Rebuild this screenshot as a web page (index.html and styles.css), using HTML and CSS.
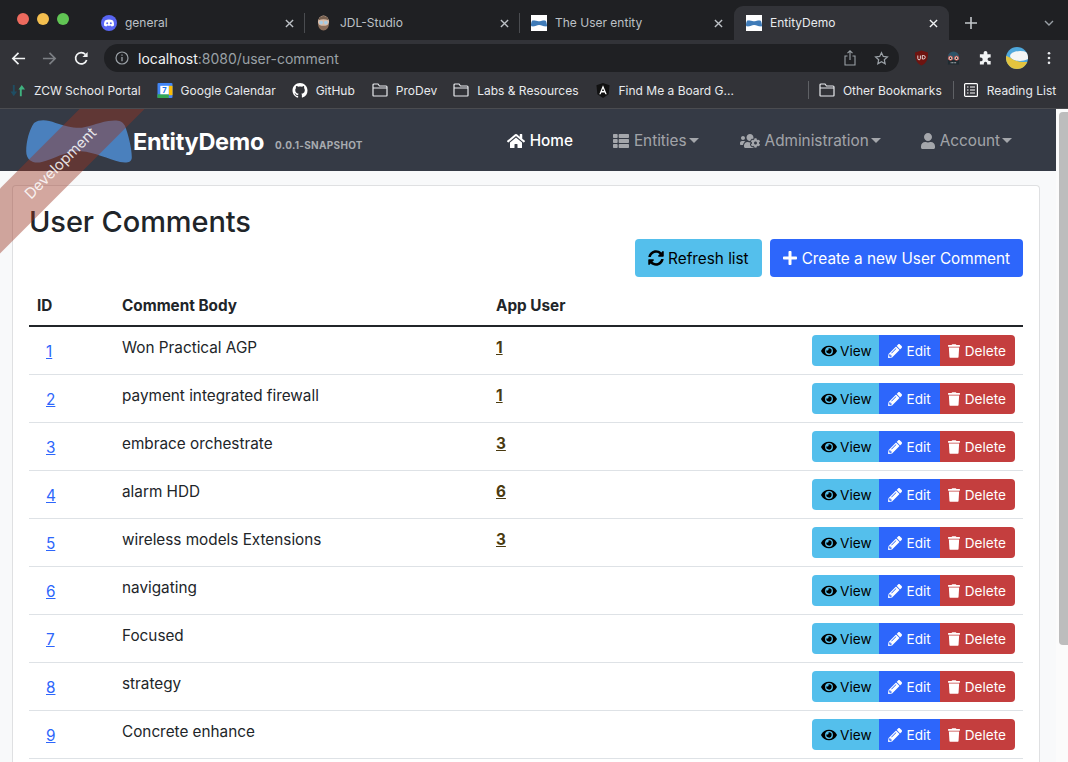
FILE: index.html
```html
<!DOCTYPE html>
<html lang="en">
<head>
    <meta charset="UTF-8">
    <meta name="viewport" content="width=device-width, initial-scale=1.0">
    <title>EntityDemo</title>
    <link rel="stylesheet" href="styles.css">
</head>
<body>
    <svg class="sprites" aria-hidden="true">
        <symbol id="i-home" viewBox="0 0 576 512"><path d="M280.37 148.26L96 300.11V464a16 16 0 0 0 16 16l112.06-.29a16 16 0 0 0 15.92-16V368a16 16 0 0 1 16-16h64a16 16 0 0 1 16 16v95.64a16 16 0 0 0 16 16.05L464 480a16 16 0 0 0 16-16V300L295.67 148.26a12.19 12.19 0 0 0-15.3 0zM571.6 251.47L488 182.56V44.05a12 12 0 0 0-12-12h-56a12 12 0 0 0-12 12v72.61L318.47 43a48 48 0 0 0-61 0L4.34 251.47a12 12 0 0 0-1.6 16.9l25.5 31A12 12 0 0 0 45.15 301l235.22-193.74a12.19 12.19 0 0 1 15.3 0L530.9 301a12 12 0 0 0 16.9-1.6l25.5-31a12 12 0 0 0-1.7-16.93z"/></symbol>
        <symbol id="i-list" viewBox="0 0 512 512"><path d="M149.333 216v80c0 13.255-10.745 24-24 24H24c-13.255 0-24-10.745-24-24v-80c0-13.255 10.745-24 24-24h101.333c13.255 0 24 10.745 24 24zM0 376v80c0 13.255 10.745 24 24 24h101.333c13.255 0 24-10.745 24-24v-80c0-13.255-10.745-24-24-24H24c-13.255 0-24 10.745-24 24zM125.333 32H24C10.745 32 0 42.745 0 56v80c0 13.255 10.745 24 24 24h101.333c13.255 0 24-10.745 24-24V56c0-13.255-10.745-24-24-24zm80 448H488c13.255 0 24-10.745 24-24v-80c0-13.255-10.745-24-24-24H205.333c-13.255 0-24 10.745-24 24v80c0 13.255 10.745 24 24 24zm-24-424v80c0 13.255 10.745 24 24 24H488c13.255 0 24-10.745 24-24V56c0-13.255-10.745-24-24-24H205.333c-13.255 0-24 10.745-24 24zm24 264H488c13.255 0 24-10.745 24-24v-80c0-13.255-10.745-24-24-24H205.333c-13.255 0-24 10.745-24 24v80c0 13.255 10.745 24 24 24z"/></symbol>
        <symbol id="i-users-cog" viewBox="0 0 640 512"><path d="M610.5 341.3c2.6-14.1 2.6-28.5 0-42.6l25.8-14.9c3-1.7 4.3-5.2 3.3-8.5-6.7-21.6-18.2-41.2-33.2-57.4-2.3-2.5-6-3.1-9-1.4l-25.8 14.9c-10.9-9.3-23.4-16.5-36.9-21.3v-29.8c0-3.4-2.4-6.4-5.7-7.1-22.3-5-45-4.8-66.2 0-3.3.7-5.7 3.7-5.7 7.1v29.8c-13.5 4.8-26 12-36.9 21.3l-25.8-14.9c-2.9-1.7-6.7-1.1-9 1.4-15 16.2-26.5 35.8-33.2 57.4-1 3.3.4 6.8 3.3 8.5l25.8 14.9c-2.6 14.1-2.6 28.5 0 42.6l-25.8 14.9c-3 1.7-4.3 5.2-3.3 8.5 6.7 21.6 18.2 41.1 33.2 57.4 2.3 2.5 6 3.1 9 1.4l25.8-14.9c10.9 9.3 23.4 16.5 36.9 21.3v29.8c0 3.4 2.4 6.4 5.7 7.1 22.3 5 45 4.8 66.2 0 3.3-.7 5.7-3.7 5.7-7.1v-29.8c13.5-4.8 26-12 36.9-21.3l25.8 14.9c2.9 1.7 6.7 1.1 9-1.4 15-16.2 26.5-35.8 33.2-57.4 1-3.3-.4-6.8-3.3-8.5l-25.8-14.9zM496 368.5c-26.8 0-48.5-21.8-48.5-48.5s21.8-48.5 48.5-48.5 48.5 21.8 48.5 48.5-21.7 48.5-48.5 48.5zM96 224c35.3 0 64-28.7 64-64s-28.7-64-64-64-64 28.7-64 64 28.7 64 64 64zm224 32c1.9 0 3.7-.5 5.6-.6 8.3-21.7 20.5-42.1 36.3-59.2 7.4-8 17.9-12.6 28.9-12.6 6.9 0 13.7 1.8 19.6 5.3l7.9 4.6c.8-.5 1.6-.9 2.4-1.4 7-14.6 11.2-30.8 11.2-48 0-61.9-50.1-112-112-112S208 82.1 208 144c0 61.9 50.1 112 112 112zm105.2 194.5c-2.3-1.2-4.6-2.6-6.8-3.9-8.2 4.8-15.3 9.8-27.5 9.8-10.9 0-21.4-4.6-28.9-12.6-18.3-19.8-32.3-43.9-40.2-69.6-10.7-34.5 24.9-49.7 25.8-50.3-.1-2.6-.1-5.2 0-7.8l-7.9-4.6c-3.8-2.2-7-5-9.8-8.1-3.3.2-6.5.6-9.8.6-24.6 0-47.6-6-68.5-16h-8.3C179.6 288 128 339.6 128 403.2V432c0 26.5 21.5 48 48 48h255.4c-3.7-6-6.2-12.8-6.2-20.3v-9.2zM173.1 274.6C161.5 263.1 145.6 256 128 256H64c-35.3 0-64 28.7-64 64v32c0 17.7 14.3 32 32 32h65.9c6.3-47.4 34.9-87.3 75.2-109.4z"/></symbol>
        <symbol id="i-user" viewBox="0 0 448 512"><path d="M224 256c70.7 0 128-57.3 128-128S294.7 0 224 0 96 57.3 96 128s57.3 128 128 128zm89.6 32h-16.7c-22.2 10.2-46.9 16-72.9 16s-50.6-5.8-72.9-16h-16.7C60.2 288 0 348.2 0 422.4V464c0 26.5 21.5 48 48 48h352c26.5 0 48-21.5 48-48v-41.6c0-74.2-60.2-134.4-134.4-134.4z"/></symbol>
        <symbol id="i-eye" viewBox="0 0 576 512"><path d="M572.52 241.4C518.29 135.59 410.93 64 288 64S57.68 135.64 3.48 241.41a32.35 32.35 0 0 0 0 29.19C57.71 376.41 165.07 448 288 448s230.32-71.64 284.52-177.41a32.35 32.35 0 0 0 0-29.19zM288 400a144 144 0 1 1 144-144 143.93 143.93 0 0 1-144 144zm0-240a95.31 95.31 0 0 0-25.31 3.79 47.85 47.85 0 0 1-66.9 66.9A95.78 95.78 0 1 0 288 160z"/></symbol>
        <symbol id="i-pencil" viewBox="0 0 512 512"><path d="M497.9 142.1l-46.1 46.1c-4.7 4.7-12.3 4.7-17 0l-111-111c-4.7-4.7-4.7-12.3 0-17l46.1-46.1c18.7-18.7 49.1-18.7 67.9 0l60.1 60.1c18.8 18.7 18.8 49.1 0 67.9zM284.2 99.8L21.6 362.4.4 483.9c-2.9 16.4 11.4 30.6 27.8 27.8l121.5-21.3 262.6-262.6c4.7-4.7 4.7-12.3 0-17l-111-111c-4.8-4.7-12.4-4.7-17.1 0zM124.1 339.9c-5.5-5.5-5.5-14.3 0-19.8l154-154c5.5-5.5 14.3-5.5 19.8 0s5.5 14.3 0 19.8l-154 154c-5.5 5.5-14.3 5.5-19.8 0zM88 424h48v36.3l-64.5 11.3-31.1-31.1L51.7 376H88v48z"/></symbol>
        <symbol id="i-trash" viewBox="0 0 448 512"><path d="M432 32H312l-9.4-18.7A24 24 0 0 0 281.1 0H166.8a23.72 23.72 0 0 0-21.4 13.3L136 32H16A16 16 0 0 0 0 48v32a16 16 0 0 0 16 16h416a16 16 0 0 0 16-16V48a16 16 0 0 0-16-16zM53.2 467a48 48 0 0 0 47.9 45h245.8a48 48 0 0 0 47.9-45L416 128H32z"/></symbol>
        <symbol id="i-sync" viewBox="0 0 512 512"><path d="M370.72 133.28C339.458 104.008 298.888 87.962 255.848 88c-77.458.068-144.328 53.178-162.791 126.85-1.344 5.363-6.122 9.15-11.651 9.15H24.103c-7.498 0-13.194-6.807-11.807-14.176C33.933 94.924 134.813 8 256 8c66.448 0 126.791 26.136 171.315 68.685L463.03 40.97C478.149 25.851 504 36.559 504 57.941V192c0 13.255-10.745 24-24 24H345.941c-21.382 0-32.09-25.851-16.971-40.971l41.75-41.749zM32 296h134.059c21.382 0 32.09 25.851 16.971 40.971l-41.75 41.75c31.262 29.273 71.835 45.319 114.876 45.28 77.418-.07 144.315-53.144 162.787-126.849 1.344-5.363 6.122-9.15 11.651-9.15h57.304c7.498 0 13.194 6.807 11.807 14.176C478.067 417.076 377.187 504 256 504c-66.448 0-126.791-26.136-171.315-68.685L48.97 471.03C33.851 486.149 8 475.441 8 454.059V320c0-13.255 10.745-24 24-24z"/></symbol>
        <symbol id="i-plus" viewBox="0 0 448 512"><path d="M416 208H272V64c0-17.67-14.33-32-32-32h-32c-17.67 0-32 14.33-32 32v144H32c-17.67 0-32 14.33-32 32v32c0 17.67 14.33 32 32 32h144v144c0 17.67 14.33 32 32 32h32c17.67 0 32-14.33 32-32V304h144c17.67 0 32-14.33 32-32v-32c0-17.67-14.33-32-32-32z"/></symbol>
        <symbol id="i-bowtie" viewBox="0 0 108 45"><path d="M8 3C14-1 22 0 30 3C40 6 46 8 54 8C62 8 72 3 84 1C92 0 98 0 101 6C104 14 108 28 108 38C108 44 102 44 96 43C84 40 70 33 56 32C42 31 28 40 16 43C8 45 0 42 0 32C0 22 3 10 8 3Z"/></symbol>
        <symbol id="i-folder" viewBox="0 0 16 14"><path d="M1 12.5V2a1 1 0 0 1 1-1h4l1.5 2H14a1 1 0 0 1 1 1v8.500a.5.5 0 0 1-.5.5h-13a.5.5 0 0 1-.5-.5zM1 5h14" fill="none" stroke="currentColor" stroke-width="1.2"/></symbol>
        <symbol id="i-close" viewBox="0 0 10 10"><path d="M1 1l8 8M9 1l-8 8" fill="none" stroke="currentColor" stroke-width="1.5"/></symbol>
    </svg>

    <div class="tabstrip">
        <div class="traffic">
            <span class="light light-red"></span>
            <span class="light light-yellow"></span>
            <span class="light light-green"></span>
        </div>
        <div class="tab">
            <svg class="favicon" viewBox="0 0 16 16"><circle cx="8" cy="8" r="8" fill="#5865f2"/><path d="M4 5.500c2.500-1.200 5.500-1.200 8 0 .9 1.800 1.100 3.500 1 5-1 .7-1.800 1-2.500 1.100l-.6-1c-1.200.3-2.600.3-3.800 0l-.6 1c-.7-.1-1.500-.4-2.500-1.100-.1-1.500.1-3.200 1-5z" fill="#fff"/><circle cx="6.200" cy="8.200" r="1" fill="#5865f2"/><circle cx="9.800" cy="8.200" r="1" fill="#5865f2"/></svg>
            <span class="tab-title">general</span>
            <svg class="tab-close"><use href="#i-close"/></svg>
        </div>
        <div class="tab">
            <svg class="favicon favicon-face" viewBox="0 0 14 16"><ellipse cx="7" cy="7" rx="6" ry="7" fill="#d8bca8"/><path d="M1 8c0 5 2.800 8 6 8s6-3 6-8c-1 2.500-3 3-6 3S2 10.500 1 8z" fill="#8a6d5a"/><path d="M1.500 5C2.500-1 11.500-1 12.500 5 9 3.500 5 3.500 1.500 5z" fill="#77604f"/><circle cx="4.500" cy="7.500" r="2" fill="#a9cbe2"/><circle cx="9.500" cy="7.500" r="2" fill="#a9cbe2"/></svg>
            <span class="tab-title">JDL-Studio</span>
            <svg class="tab-close"><use href="#i-close"/></svg>
        </div>
        <div class="tab tab-last">
            <div class="favicon favicon-box"><svg viewBox="0 0 108 45"><use href="#i-bowtie"/></svg></div>
            <span class="tab-title">The User entity</span>
            <svg class="tab-close"><use href="#i-close"/></svg>
        </div>
        <div class="tab tab-active">
            <div class="favicon favicon-box"><svg viewBox="0 0 108 45"><use href="#i-bowtie"/></svg></div>
            <span class="tab-title">EntityDemo</span>
            <svg class="tab-close"><use href="#i-close"/></svg>
        </div>
        <svg class="new-tab" viewBox="0 0 12 12"><path d="M6 0v12M0 6h12" fill="none" stroke="currentColor" stroke-width="1.600"/></svg>
        <svg class="tab-menu" viewBox="0 0 10 6"><path d="M1 1l4 4 4-4" fill="none" stroke="currentColor" stroke-width="1.400"/></svg>
    </div>

    <div class="toolbar">
        <svg class="tool tool-back" viewBox="0 0 16 16"><path d="M15 8H2M8 2L2 8l6 6" fill="none" stroke="currentColor" stroke-width="1.800"/></svg>
        <svg class="tool tool-forward" viewBox="0 0 16 16"><path d="M1 8h13M8 2l6 6-6 6" fill="none" stroke="currentColor" stroke-width="1.800"/></svg>
        <svg class="tool tool-reload" viewBox="0 0 16 16"><path d="M13.500 9.500A6 6 0 1 1 12.200 3.700" fill="none" stroke="currentColor" stroke-width="1.800"/><path d="M14.500 1v5.500H9z" fill="currentColor"/></svg>
        <div class="omnibox">
            <svg class="omni-info" viewBox="0 0 14 14"><circle cx="7" cy="7" r="6" fill="none" stroke="currentColor" stroke-width="1.200"/><path d="M7 6v4.200M7 3.500v1.300" stroke="currentColor" stroke-width="1.300"/></svg>
            <span class="omni-url"><b>localhost</b>:8080/user-comment</span>
            <svg class="omni-share" viewBox="0 0 12 16"><path d="M3.500 6H1v9h10V6H8.500M6 10V1M3.500 3.200L6 .8l2.500 2.400" fill="none" stroke="currentColor" stroke-width="1.100"/></svg>
            <svg class="omni-star" viewBox="0 0 16 16"><path d="M8 1.800l1.900 4 4.400.5-3.300 3 .9 4.400L8 11.500l-3.900 2.200.9-4.400-3.300-3 4.400-.5z" fill="none" stroke="currentColor" stroke-width="1.300"/></svg>
        </div>
        <svg class="ext ext-ublock" viewBox="0 0 14 16"><path d="M7 .5l6.500 2c0 6-.8 10.500-6.500 13C1.300 13 .5 8.500.5 2.500z" fill="#6e1410"/><path d="M3.300 5.500v3a1.300 1.300 0 0 0 2.600 0v-3M7.800 5.500h1.200a1.700 1.700 0 0 1 0 3.500H7.800z" fill="none" stroke="#fff" stroke-width=".8"/></svg>
        <svg class="ext ext-ghost" viewBox="0 0 16 16"><path d="M2 14V7a6 6 0 0 1 12 0v7z" fill="#2c5468"/><path d="M2 10h12v5H2z" fill="#1f2a30"/><path d="M5 13h6" stroke="#c9ced1" stroke-width="1.200" stroke-dasharray="1 .6"/><circle cx="4.800" cy="8.200" r="2.300" fill="#f0d9cf" stroke="#c9473f" stroke-width=".8"/><circle cx="11.200" cy="8.200" r="2.300" fill="#f0d9cf" stroke="#c9473f" stroke-width=".8"/><circle cx="4.800" cy="8.200" r=".9" fill="#222"/><circle cx="11.200" cy="8.200" r=".9" fill="#222"/></svg>
        <svg class="ext ext-puzzle" viewBox="0 0 16 16"><path d="M6 2.500a2 2 0 0 1 4 0V4h3.500v3.500H12a1.800 1.800 0 0 0 0 3.600h1.500V15H9.800v-1.200a1.800 1.800 0 0 0-3.600 0V15H2v-3.500h1a2 2 0 0 0 0-4H2V4h4z" fill="#f1f3f4"/></svg>
        <svg class="avatar" viewBox="0 0 22 22"><defs><clipPath id="avatar-clip"><circle cx="11" cy="11" r="11"/></clipPath></defs><g clip-path="url(#avatar-clip)"><rect width="22" height="22" fill="#4fa8dc"/><ellipse cx="14" cy="9" rx="10" ry="5" fill="#f4f6f6"/><path d="M0 9c5 1 8 7 22 6v7H0z" fill="#e3c43f"/></g></svg>
        <svg class="kebab" viewBox="0 0 4 16"><circle cx="2" cy="2.500" r="1.500"/><circle cx="2" cy="8" r="1.500"/><circle cx="2" cy="13.500" r="1.500"/></svg>
    </div>

    <div class="bookmarks">
        <div class="mark mark-zcw">
            <svg class="mark-icon" viewBox="0 0 16 16"><path d="M2.500 2v7H0l3.500 5L7 9H4.500V2z" fill="#1f4e63"/><path d="M12 14V7h3.500L12 2 8.500 7H10v7z" fill="#3fb27f"/></svg>
            <span>ZCW School Portal</span>
        </div>
        <div class="mark">
            <svg class="mark-icon" viewBox="0 0 16 16"><rect width="16" height="16" rx="1" fill="#4285f4"/><rect x="12" y="3" width="4" height="10" fill="#fbbc04"/><rect y="12" width="12" height="4" fill="#34a853"/><rect x="3" y="3" width="9" height="9" fill="#fff"/><text x="7.500" y="10.500" class="cal-num">7</text></svg>
            <span>Google Calendar</span>
        </div>
        <div class="mark">
            <svg class="mark-icon" viewBox="0 0 16 16"><path fill="#fff" d="M8 0C3.580 0 0 3.580 0 8c0 3.540 2.290 6.530 5.470 7.590.4.070.55-.17.55-.38 0-.19-.01-.82-.01-1.490-2.010.370-2.530-.49-2.690-.94-.09-.23-.48-.94-.82-1.130-.28-.15-.68-.52-.01-.53.63-.01 1.080.58 1.230.82.720 1.210 1.870.87 2.330.66.070-.52.280-.87.510-1.070-1.780-.2-3.640-.89-3.640-3.950 0-.87.310-1.590.82-2.150-.08-.2-.36-1.020.08-2.120 0 0 .67-.21 2.200.82.640-.18 1.320-.27 2-.27s1.360.09 2 .27c1.530-1.040 2.200-.82 2.200-.82.440 1.100.160 1.920.08 2.120.51.560.82 1.270.82 2.150 0 3.070-1.870 3.750-3.650 3.950.29.250.54.730.54 1.480 0 1.070-.01 1.930-.01 2.200 0 .21.150.46.550.38A8.010 8.010 0 0 0 16 8c0-4.420-3.580-8-8-8z"/></svg>
            <span>GitHub</span>
        </div>
        <div class="mark mark-pro">
            <svg class="mark-icon mark-folder"><use href="#i-folder"/></svg>
            <span>ProDev</span>
        </div>
        <div class="mark">
            <svg class="mark-icon mark-folder"><use href="#i-folder"/></svg>
            <span>Labs &amp; Resources</span>
        </div>
        <div class="mark">
            <svg class="mark-icon" viewBox="0 0 16 16"><path d="M8 0L1 2.500l1 9.500 6 4 6-4 1-9.500z" fill="#111"/><path d="M8 2.500L4 12h1.500l.8-2h3.400l.8 2H12zM6.900 8.500L8 5.800l1.100 2.700z" fill="#fff"/></svg>
            <span>Find Me a Board G...</span>
        </div>
        <div class="mark-sep"></div>
        <div class="mark mark-other">
            <svg class="mark-icon mark-folder"><use href="#i-folder"/></svg>
            <span>Other Bookmarks</span>
        </div>
        <div class="mark-sep mark-sep-2"></div>
        <div class="mark mark-read">
            <svg class="mark-icon mark-list" viewBox="0 0 14 14"><rect x=".6" y=".6" width="12.800" height="12.800" rx="1" fill="none" stroke="#fff" stroke-width="1.200"/><path d="M3 4h1.500M6 4h5M3 7h1.500M6 7h5M3 10h1.500M6 10h5" stroke="#fff" stroke-width="1.100"/></svg>
            <span>Reading List</span>
        </div>
    </div>

    <div class="viewport">
        <div class="page">
            <nav class="navbar">
                <a class="brand">
                    <svg class="brand-logo"><use href="#i-bowtie"/></svg>
                    <span class="brand-title">EntityDemo</span>
                    <span class="brand-version">0.0.1-SNAPSHOT</span>
                </a>
                <ul class="nav-links">
                    <li class="nav-item nav-home"><svg class="nav-icon nav-icon-home"><use href="#i-home"/></svg>Home</li>
                    <li class="nav-item"><svg class="nav-icon"><use href="#i-list"/></svg>Entities<i class="caret"></i></li>
                    <li class="nav-item nav-admin"><svg class="nav-icon nav-icon-cog"><use href="#i-users-cog"/></svg>Administration<i class="caret"></i></li>
                    <li class="nav-item"><svg class="nav-icon nav-icon-user"><use href="#i-user"/></svg>Account<i class="caret"></i></li>
                </ul>
            </nav>

            <main class="content">
                <div class="card">
                    <h2 class="page-title">User Comments</h2>
                    <div class="top-actions">
                        <button class="btn btn-info" type="button"><svg class="icon icon-sync"><use href="#i-sync"/></svg>Refresh list</button>
                        <button class="btn btn-primary" type="button"><svg class="icon icon-plus"><use href="#i-plus"/></svg>Create a new User Comment</button>
                    </div>
                    <table class="table">
                        <thead>
                            <tr><th class="col-id">ID</th><th class="col-body">Comment Body</th><th class="col-user">App User</th><th></th></tr>
                        </thead>
                        <tbody>
                            <tr>
                                <td class="cell-id"><a href="#">1</a></td><td>Won Practical AGP</td><td><a class="user-link" href="#">1</a></td>
                                <td class="cell-actions"><div class="btn-group"><button class="btn-sm btn-info" type="button"><svg class="icon icon-eye"><use href="#i-eye"/></svg>View</button><button class="btn-sm btn-primary" type="button"><svg class="icon icon-pencil"><use href="#i-pencil"/></svg>Edit</button><button class="btn-sm btn-danger" type="button"><svg class="icon icon-trash"><use href="#i-trash"/></svg>Delete</button></div></td>
                            </tr>
                            <tr>
                                <td class="cell-id"><a href="#">2</a></td><td>payment integrated firewall</td><td><a class="user-link" href="#">1</a></td>
                                <td class="cell-actions"><div class="btn-group"><button class="btn-sm btn-info" type="button"><svg class="icon icon-eye"><use href="#i-eye"/></svg>View</button><button class="btn-sm btn-primary" type="button"><svg class="icon icon-pencil"><use href="#i-pencil"/></svg>Edit</button><button class="btn-sm btn-danger" type="button"><svg class="icon icon-trash"><use href="#i-trash"/></svg>Delete</button></div></td>
                            </tr>
                            <tr>
                                <td class="cell-id"><a href="#">3</a></td><td>embrace orchestrate</td><td><a class="user-link" href="#">3</a></td>
                                <td class="cell-actions"><div class="btn-group"><button class="btn-sm btn-info" type="button"><svg class="icon icon-eye"><use href="#i-eye"/></svg>View</button><button class="btn-sm btn-primary" type="button"><svg class="icon icon-pencil"><use href="#i-pencil"/></svg>Edit</button><button class="btn-sm btn-danger" type="button"><svg class="icon icon-trash"><use href="#i-trash"/></svg>Delete</button></div></td>
                            </tr>
                            <tr>
                                <td class="cell-id"><a href="#">4</a></td><td>alarm HDD</td><td><a class="user-link" href="#">6</a></td>
                                <td class="cell-actions"><div class="btn-group"><button class="btn-sm btn-info" type="button"><svg class="icon icon-eye"><use href="#i-eye"/></svg>View</button><button class="btn-sm btn-primary" type="button"><svg class="icon icon-pencil"><use href="#i-pencil"/></svg>Edit</button><button class="btn-sm btn-danger" type="button"><svg class="icon icon-trash"><use href="#i-trash"/></svg>Delete</button></div></td>
                            </tr>
                            <tr>
                                <td class="cell-id"><a href="#">5</a></td><td>wireless models Extensions</td><td><a class="user-link" href="#">3</a></td>
                                <td class="cell-actions"><div class="btn-group"><button class="btn-sm btn-info" type="button"><svg class="icon icon-eye"><use href="#i-eye"/></svg>View</button><button class="btn-sm btn-primary" type="button"><svg class="icon icon-pencil"><use href="#i-pencil"/></svg>Edit</button><button class="btn-sm btn-danger" type="button"><svg class="icon icon-trash"><use href="#i-trash"/></svg>Delete</button></div></td>
                            </tr>
                            <tr>
                                <td class="cell-id"><a href="#">6</a></td><td>navigating</td><td></td>
                                <td class="cell-actions"><div class="btn-group"><button class="btn-sm btn-info" type="button"><svg class="icon icon-eye"><use href="#i-eye"/></svg>View</button><button class="btn-sm btn-primary" type="button"><svg class="icon icon-pencil"><use href="#i-pencil"/></svg>Edit</button><button class="btn-sm btn-danger" type="button"><svg class="icon icon-trash"><use href="#i-trash"/></svg>Delete</button></div></td>
                            </tr>
                            <tr>
                                <td class="cell-id"><a href="#">7</a></td><td>Focused</td><td></td>
                                <td class="cell-actions"><div class="btn-group"><button class="btn-sm btn-info" type="button"><svg class="icon icon-eye"><use href="#i-eye"/></svg>View</button><button class="btn-sm btn-primary" type="button"><svg class="icon icon-pencil"><use href="#i-pencil"/></svg>Edit</button><button class="btn-sm btn-danger" type="button"><svg class="icon icon-trash"><use href="#i-trash"/></svg>Delete</button></div></td>
                            </tr>
                            <tr>
                                <td class="cell-id"><a href="#">8</a></td><td>strategy</td><td></td>
                                <td class="cell-actions"><div class="btn-group"><button class="btn-sm btn-info" type="button"><svg class="icon icon-eye"><use href="#i-eye"/></svg>View</button><button class="btn-sm btn-primary" type="button"><svg class="icon icon-pencil"><use href="#i-pencil"/></svg>Edit</button><button class="btn-sm btn-danger" type="button"><svg class="icon icon-trash"><use href="#i-trash"/></svg>Delete</button></div></td>
                            </tr>
                            <tr>
                                <td class="cell-id"><a href="#">9</a></td><td>Concrete enhance</td><td></td>
                                <td class="cell-actions"><div class="btn-group"><button class="btn-sm btn-info" type="button"><svg class="icon icon-eye"><use href="#i-eye"/></svg>View</button><button class="btn-sm btn-primary" type="button"><svg class="icon icon-pencil"><use href="#i-pencil"/></svg>Edit</button><button class="btn-sm btn-danger" type="button"><svg class="icon icon-trash"><use href="#i-trash"/></svg>Delete</button></div></td>
                            </tr>
                        </tbody>
                    </table>
                </div>
            </main>

            <div class="ribbon"><div class="ribbon-band">Development</div></div>
        </div>
        <div class="scrollbar"><div class="scroll-thumb"></div></div>
    </div>
</body>
</html>
```

FILE: styles.css
```css
* {
    box-sizing: border-box;
}

html, body {
    height: 100%;
    margin: 0;
    overflow: hidden;
}

body {
    display: flex;
    flex-direction: column;
    font-family: Inter, "Noto Sans", sans-serif;
    font-size: 15.3px;
    color: #212529;
    background: #202124;
}

.sprites {
    display: none;
}

/* browser chrome */
.tabstrip {
    display: flex;
    align-items: flex-end;
    height: 40px;
    flex: none;
    background: #1f2023;
    color: #bdc1c6;
    font-size: 12px;
}

.traffic {
    display: flex;
    gap: 8px;
    width: 90px;
    height: 34px;
    padding: 7px 0 0 17px;
    align-self: flex-start;
    margin-top: 6px;
}

.light {
    width: 12px;
    height: 12px;
    border-radius: 50%;
}

.light-red { background: #ed6a5e; }
.light-yellow { background: #f4bf4f; }
.light-green { background: #61c554; }

.tab {
    display: flex;
    align-items: center;
    width: 215px;
    height: 34px;
    padding-left: 11px;
}

.tab::after {
    content: "";
    flex: none;
    width: 1px;
    height: 20px;
    background: #4a4c50;
}

.tab-last {
    width: 214px;
}

.tab-last::after,
.tab-active::after {
    background: transparent;
}

.tab-active {
    padding-left: 12px;
    background: #323338;
    color: #e8eaed;
    border-radius: 9px 9px 0 0;
}

.favicon {
    width: 16px;
    height: 16px;
    flex: none;
    margin-right: 8px;
}

.favicon-face {
    width: 13px;
    margin-left: 1px;
    margin-right: 10px;
}

.favicon-box {
    background: #fff;
    display: flex;
    align-items: center;
}

.favicon-box svg {
    width: 16px;
    height: 7px;
    fill: #3f7bb8;
}

.tab-title {
    flex: 1;
    white-space: nowrap;
    overflow: hidden;
    margin-top: -1px;
}

.tab-close {
    width: 9px;
    height: 9px;
    flex: none;
    margin-right: 10px;
}

.tab-active .tab-close {
    color: #f1f3f4;
}

.new-tab {
    width: 12px;
    height: 12px;
    margin: 0 0 11px 16px;
    color: #c4c7cb;
}

.tab-menu {
    width: 10px;
    height: 6px;
    margin: 0 0 14px 67px;
    color: #9aa0a6;
}

.toolbar {
    display: flex;
    align-items: center;
    height: 40px;
    flex: none;
    background: #323338;
    padding: 0 0 4px 11px;
    color: #f1f3f4;
}

.tool {
    width: 15px;
    height: 15px;
    flex: none;
}

.tool-forward {
    margin-left: 16px;
    color: #7c7f84;
}

.tool-reload {
    margin-left: 17px;
}

.omnibox {
    display: flex;
    align-items: center;
    width: 795px;
    height: 28px;
    margin-left: 15px;
    padding: 0 10px 0 11px;
    border-radius: 14px;
    background: #1f2023;
    color: #9aa0a6;
    font-size: 14px;
}

.omni-info {
    width: 14px;
    height: 14px;
    flex: none;
}

.omni-url {
    flex: 1;
    margin-left: 9px;
}

.omni-url b {
    font-weight: 400;
    color: #f1f3f4;
}

.omni-share {
    width: 12px;
    height: 16px;
    margin-right: 18px;
}

.omni-star {
    width: 15px;
    height: 15px;
}

.ext {
    flex: none;
    width: 15px;
    height: 16px;
}

.ext-ublock { margin-left: 15px; }
.ext-ghost { margin-left: 17px; }
.ext-puzzle { margin-left: 17px; }

.avatar {
    flex: none;
    width: 22px;
    height: 22px;
    margin-left: 13px;
}

.kebab {
    flex: none;
    width: 4px;
    height: 14px;
    margin-left: 19px;
    fill: #e8eaed;
}

.bookmarks {
    display: flex;
    align-items: center;
    gap: 16px;
    height: 29px;
    flex: none;
    background: #323338;
    border-bottom: 1px solid #4b4c50;
    color: #e8eaed;
    font-size: 12px;
    padding: 0 0 8px 10px;
}

.mark {
    display: flex;
    align-items: center;
    white-space: nowrap;
}

.mark-pro {
    margin-left: 1px;
}

.mark-icon {
    width: 16px;
    height: 15px;
    flex: none;
    margin-right: 8px;
}

.mark-folder {
    height: 14px;
    color: #e8eaed;
}

.mark-list {
    width: 14px;
    height: 14px;
    margin-right: 9px;
}

.cal-num {
    font-size: 8px;
    font-weight: 700;
    fill: #1a73e8;
    text-anchor: middle;
}

.mark-sep {
    width: 1px;
    height: 18px;
    margin-left: 58px;
    margin-right: -6px;
    background: #5f6165;
}

.mark-sep-2 {
    margin-left: -5px;
}

/* app */
.viewport {
    flex: 1;
    display: flex;
    min-height: 0;
}

.page {
    flex: 1;
    display: flex;
    flex-direction: column;
    min-width: 0;
    position: relative;
    background: #f8f9fa;
    overflow: hidden;
}

.navbar {
    display: flex;
    align-items: center;
    height: 62px;
    flex: none;
    background: #353a45;
    padding: 0 44px 0 25px;
}

.brand {
    display: flex;
    align-items: center;
    color: #fff;
}

.brand-logo {
    width: 108px;
    height: 44px;
    fill: #4a80bd;
    margin-top: 4px;
}

.brand-title {
    margin-top: 3px;
    font-size: 23.5px;
    font-weight: 700;
    letter-spacing: -0.3px;
}

.brand-version {
    margin: 9px 0 0 11px;
    font-size: 10px;
    font-weight: 700;
    letter-spacing: 0.3px;
    color: #a7abb0;
}

.nav-links {
    display: flex;
    gap: 40px;
    list-style: none;
    margin: 1px 0 0 auto;
    padding: 0;
}

.nav-item {
    display: flex;
    align-items: center;
    line-height: 20px;
    color: rgba(255, 255, 255, 0.55);
}

.nav-home {
    color: #fff;
    font-weight: 500;
}

.nav-admin {
    margin-left: 1px;
}

.nav-icon {
    width: 16px;
    height: 16px;
    margin-right: 5px;
    fill: currentColor;
}

.nav-icon-home {
    width: 18px;
}

.nav-icon-cog {
    width: 20px;
}

.nav-icon-user {
    width: 14px;
}

.caret {
    width: 0;
    height: 0;
    margin-left: 2px;
    border: 5px solid transparent;
    border-top-color: currentColor;
    border-bottom: 0;
}

.content {
    flex: 1;
    padding: 14px 16px 0 12px;
    display: flex;
    min-height: 0;
}

.card {
    flex: 1;
    min-width: 0;
    padding: 16px 16px 0;
    background: #fff;
    border: 1px solid #dfe0e2;
    border-bottom: 0;
    border-radius: 4px 4px 0 0;
}

.page-title {
    margin: 0;
    font-size: 29px;
    font-weight: 500;
    line-height: 40px;
    letter-spacing: -0.1px;
}

.top-actions {
    display: flex;
    justify-content: flex-end;
    gap: 8px;
    margin-top: -3px;
}

.btn, .btn-sm {
    display: inline-flex;
    align-items: center;
    border: 0;
    font-family: inherit;
    white-space: nowrap;
}

.btn {
    height: 38px;
    padding: 0 13px;
    border-radius: 4px;
    font-size: 15.3px;
}

.btn-sm {
    height: 31px;
    padding: 1px 8px 0 9px;
    font-size: 13.6px;
}

.btn-info { background: #54bfec; color: #000; }
.btn-primary { background: #2d66fb; color: #fff; }
.btn-danger { background: #c43e3e; color: #fff; }

.icon {
    width: 16px;
    height: 16px;
    margin-right: 5px;
    fill: currentColor;
    flex: none;
}

.icon-sync {
    margin-right: 4px;
}

.icon-plus {
    width: 14px;
}

.btn-sm .icon {
    width: 14px;
    height: 14px;
}

.btn-sm .icon-eye {
    width: 16px;
    margin-right: 3px;
}

.btn-sm .icon-trash {
    width: 12px;
}

.btn-info.btn-sm {
    padding-right: 7px;
}

.btn-primary.btn-sm {
    padding-right: 9px;
}

.btn-danger.btn-sm {
    padding: 1px 9px 0 8px;
}

.table {
    width: 100%;
    margin-top: 9px;
    border-collapse: collapse;
    table-layout: fixed;
}

.table th {
    height: 40px;
    padding: 0 8px;
    text-align: left;
    font-weight: 700;
    border-bottom: 2px solid #212529;
}

.col-id { width: 85px; }
.col-body { width: 374px; }
.col-user { width: 200px; }

.table td {
    height: 48px;
    padding: 0 8px 6px;
    border-bottom: 1px solid #dee2e6;
}

.table .cell-id {
    padding: 3px 8px 0 17px;
}

.cell-id a {
    color: #2d66fb;
}

.user-link {
    color: #4a3a10;
    font-weight: 700;
}

.table .cell-actions {
    padding: 0 8px;
}

.btn-group {
    display: flex;
    justify-content: flex-end;
}

.btn-group .btn-sm:first-child {
    border-radius: 4px 0 0 4px;
}

.btn-group .btn-sm:last-child {
    border-radius: 0 4px 4px 0;
}

/* corner ribbon */
.ribbon {
    position: absolute;
    left: 0;
    top: 0;
    width: 240px;
    height: 180px;
    overflow: hidden;
    pointer-events: none;
}

.ribbon-band {
    position: absolute;
    left: -108px;
    top: 32px;
    width: 330px;
    height: 46px;
    padding-left: 6px;
    line-height: 49px;
    text-align: center;
    transform: rotate(-45deg);
    background: rgba(153, 51, 33, 0.43);
    color: rgba(255, 255, 255, 0.85);
    font-size: 15px;
}

.scrollbar {
    width: 12px;
    flex: none;
    background: #fbfbfb;
    padding: 3px 0 0 3px;
}

.scroll-thumb {
    height: 533px;
    border-radius: 4px 0 0 4px;
    background: #bdbdbd;
}
```
